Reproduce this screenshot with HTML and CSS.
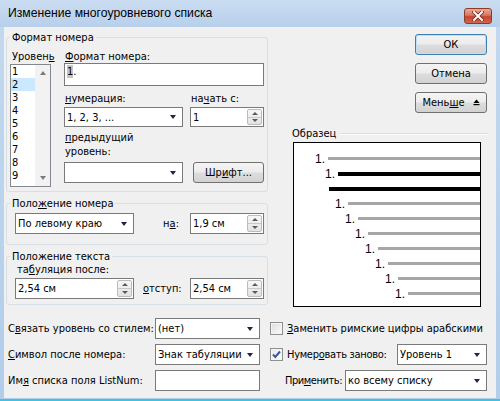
FILE: index.html
```html
<!DOCTYPE html>
<html lang="ru">
  <head>
    <meta charset="UTF-8" />
    <title>Изменение многоуровневого списка</title>
    <link rel="stylesheet" href="styles.css">
  </head>
  <body>
    <div class="window">
      <!-- Заголовок окна -->
      <div class="titlebar">
        <span class="title">Изменение многоуровневого списка</span>
        <span class="close">
          <svg width="12" height="10" viewBox="0 0 12 10">
            <path d="M2 1 L10 9 M10 1 L2 9" stroke="#7a2414" stroke-width="3.6" stroke-linecap="square" />
            <path d="M2 1 L10 9 M10 1 L2 9" stroke="#fff" stroke-width="2" stroke-linecap="square" />
          </svg>
        </span>
      </div>

      <div class="client">
        <div class="top">
          <div class="left">
            <!-- Формат номера -->
            <fieldset class="group">
              <legend>Формат номера</legend>
              <div class="format">
                <div class="levels">
                  <div class="lbl">Уровен<u>ь</u></div>
                  <div class="listbox">
                    <ul class="items">
                      <li>1</li>
                      <li class="sel">2</li>
                      <li>3</li>
                      <li>4</li>
                      <li>5</li>
                      <li>6</li>
                      <li>7</li>
                      <li>8</li>
                      <li>9</li>
                    </ul>
                    <div class="vscroll">
                      <i class="tri-up"></i>
                      <i class="tri-down"></i>
                    </div>
                  </div>
                </div>

                <div class="fields">
                  <div class="lbl wide"><u>Ф</u>ормат номера:</div>
                  <div class="edit wide"><span class="mark">1</span>.</div>

                  <div class="lbl gap6"><u>н</u>умерация:</div>
                  <div class="lbl gap6">на<u>ч</u>ать с:</div>
                  <div class="combo gap2"><span>1, 2, 3, ...</span><i class="caret"></i></div>
                  <div class="spin gap2">
                    <span>1</span>
                    <span class="spin-btns"><i><b class="s-up"></b></i><i><b class="s-down"></b></i></span>
                  </div>

                  <div class="lbl two wide"><u>п</u>редыдущий<br />уровень:</div>
                  <div class="combo gap3 tall"><span></span><i class="caret"></i></div>
                  <div class="btn font gap3"><span>Шр<u>и</u>фт...</span></div>
                </div>
              </div>
            </fieldset>

            <!-- Положение номера -->
            <fieldset class="group">
              <legend>Поло<u>ж</u>ение номера</legend>
              <div class="numpos">
                <div class="combo tall"><span>По левому краю</span><i class="caret"></i></div>
                <div class="lbl at">н<u>а</u>:</div>
                <div class="spin tall">
                  <span>1,9 см</span>
                  <span class="spin-btns"><i><b class="s-up"></b></i><i><b class="s-down"></b></i></span>
                </div>
              </div>
            </fieldset>

            <!-- Положение текста -->
            <fieldset class="group">
              <legend>Положение текста</legend>
              <div class="textpos">
                <div class="lbl tab">та<u>б</u>уляция после:</div>
                <div class="textpos-row">
                  <div class="spin tall">
                    <span>2,54 см</span>
                    <span class="spin-btns"><i><b class="s-up"></b></i><i><b class="s-down"></b></i></span>
                  </div>
                  <div class="lbl indent"><u>о</u>тступ:</div>
                  <div class="spin tall">
                    <span>2,54 см</span>
                    <span class="spin-btns"><i><b class="s-up"></b></i><i><b class="s-down"></b></i></span>
                  </div>
                </div>
              </div>
            </fieldset>
          </div>

          <div class="right">
            <div class="actions">
              <div class="btn default"><span>ОК</span></div>
              <div class="btn"><span>Отмена</span></div>
              <div class="btn">
                <span>Мень<u>ш</u>е</span>
                <svg class="eject" width="7" height="7" viewBox="0 0 7 7">
                  <polygon points="0.5,4 3.5,0.5 6.5,4" fill="#000" />
                  <rect x="0.5" y="5" width="6" height="1.2" fill="#000" />
                </svg>
              </div>
            </div>

            <!-- Образец -->
            <div class="sample-head"><span>Образец</span><i class="rule"></i></div>
            <div class="preview">
              <div class="row l1"><span class="num">1.</span><i class="bar"></i></div>
              <div class="row l2"><span class="num">1.</span><i class="bar dark"></i></div>
              <div class="row l3"><i class="bar dark"></i></div>
              <div class="row l4"><span class="num">1.</span><i class="bar"></i></div>
              <div class="row l5"><span class="num">1.</span><i class="bar"></i></div>
              <div class="row l6"><span class="num">1.</span><i class="bar"></i></div>
              <div class="row l7"><span class="num">1.</span><i class="bar"></i></div>
              <div class="row l8"><span class="num">1.</span><i class="bar"></i></div>
              <div class="row l9"><span class="num">1.</span><i class="bar"></i></div>
              <div class="row l10"><span class="num">1.</span><i class="bar"></i></div>
            </div>
          </div>
        </div>

        <!-- Нижние параметры -->
        <div class="options">
          <div class="lbl">С<u>в</u>язать уровень со стилем:</div>
          <div class="combo tall"><span>(нет)</span><i class="caret"></i></div>
          <div class="opt">
            <i class="check"></i>
            <span class="opt-text"><u>З</u>аменить римские цифры арабскими</span>
          </div>

          <div class="lbl"><u>С</u>имвол после номера:</div>
          <div class="combo tall"><span>Знак табуляции</span><i class="caret"></i></div>
          <div class="opt">
            <i class="check on">
              <svg width="11" height="11" viewBox="0 0 11 11">
                <path d="M2 5.5 L4.3 8 L9 2.5" fill="none" stroke="#3a5b9b" stroke-width="2" />
              </svg>
            </i>
            <span class="opt-text tight">Нумер<u>о</u>вать заново:</span>
            <div class="combo tall level"><span>Уровень 1</span><i class="caret"></i></div>
          </div>

          <div class="lbl">Им<u>я</u> списка поля ListNum:</div>
          <div class="edit tall"></div>
          <div class="opt apply">
            <span class="opt-text tighter">При<u>м</u>енить:</span>
            <div class="combo tall scope"><span>ко всему списку</span><i class="caret"></i></div>
          </div>
        </div>
      </div>
    </div>
  </body>
</html>
```

FILE: styles.css
```css
* {
  margin: 0;
  padding: 0;
  box-sizing: border-box;
}

body {
  font-family: "DejaVu Sans Condensed", Tahoma, "Liberation Sans", sans-serif;
  font-size: 11px;
  line-height: 13px;
  color: #000;
  background: #fff;
}

u {
  text-decoration-thickness: 1px;
  text-underline-offset: 1px;
}

/* Рамка окна */
.window {
  width: 500px;
  height: 401px;
  display: flex;
  flex-direction: column;
  background: linear-gradient(180deg, #c4d9f0, #b2cdea);
  border-bottom: 2px solid #3cc3e6;
  padding-bottom: 1px;
}

.titlebar {
  height: 27px;
  display: flex;
  align-items: center;
  justify-content: space-between;
  padding: 0 8px 0 8px;
  background: linear-gradient(180deg, #cadcf1 0%, #b8d0eb 100%);
}

.title {
  font-family: "Liberation Sans", sans-serif;
  font-size: 12.2px;
}

.close {
  width: 28px;
  height: 16px;
  margin-top: 4px;
  border: 1px solid #8d3a2b;
  border-radius: 3px;
  display: flex;
  align-items: center;
  justify-content: center;
  background: linear-gradient(180deg, #e9ab9b 0%, #d9765f 45%, #c5452c 55%, #d3664c 100%);
}

.client {
  flex: 1;
  margin: 0 4px;
  background: #f0f0f0;
  padding: 4px 8px 0 2px;
  display: flex;
  flex-direction: column;
}

.top {
  display: flex;
  gap: 24px;
}

.left {
  width: 262px;
  display: flex;
  flex-direction: column;
  gap: 5px;
}

/* Групповые рамки */
.group {
  border: 1px solid #d5dfe5;
  border-radius: 3px;
  padding: 0 3px;
  min-width: 0;
}

.group legend {
  padding: 0 2px;
  line-height: 13px;
}

.lbl {
  padding-left: 1px;
  white-space: nowrap;
}

/* Поля ввода */
.edit,
.combo,
.spin {
  background: #fff;
  border: 1px solid #7a7a7a;
  height: 20px;
}

.tall {
  height: 21px;
}

.combo {
  display: flex;
  align-items: center;
  justify-content: space-between;
  padding: 0 6px 0 2px;
}

.caret {
  width: 0;
  height: 0;
  border-style: solid;
  border-width: 4px 3.5px 0;
  border-color: #1d2740 transparent transparent;
}

.spin {
  display: flex;
  align-items: center;
  padding-left: 2px;
}

.spin-btns {
  align-self: stretch;
  width: 15px;
  margin: 1px 1px 1px auto;
  border: 1px solid #bcbcbc;
  border-radius: 2px;
  background: linear-gradient(180deg, #f7f7f7, #e2e2e2);
  display: flex;
  flex-direction: column;
}

.spin-btns i {
  flex: 1;
  display: flex;
  align-items: center;
  justify-content: center;
}

.spin-btns i + i {
  border-top: 1px solid #c8c8c8;
}

.s-up,
.s-down {
  width: 0;
  height: 0;
  border-style: solid;
  border-color: transparent;
}

.s-up {
  border-width: 0 3px 3px;
  border-bottom-color: #5a5a5a;
}

.s-down {
  border-width: 3px 3px 0;
  border-top-color: #5a5a5a;
}

/* Кнопки */
.btn {
  height: 21px;
  border: 1px solid #707070;
  border-radius: 3px;
  background: linear-gradient(180deg, #f4f4f4 0%, #ececec 48%, #dddddd 52%, #d2d2d2 100%);
  display: flex;
  align-items: center;
  justify-content: center;
  gap: 8px;
}

.btn.default {
  border-color: #3c7fb1;
  box-shadow: inset 0 0 0 1px #bfe1f7;
}

.eject {
  margin-top: -1px;
}

/* Формат номера */
.format {
  display: grid;
  grid-template-columns: 41px 200px;
  column-gap: 13px;
  padding: 6px 0 4px;
}

.levels .lbl {
  padding-left: 2px;
  margin-bottom: 1px;
}

.listbox {
  height: 123px;
  display: flex;
  background: #fff;
  border: 1px solid #828790;
}

.items {
  list-style: none;
  flex: 1;
}

.items li {
  height: 13px;
  padding-left: 1px;
}

.items .sel {
  background: #cce8ff;
}

.vscroll {
  width: 15px;
  background: #f2f2f2;
  display: flex;
  flex-direction: column;
  align-items: center;
  justify-content: space-between;
  padding: 6px 0 6px;
}

.tri-up,
.tri-down {
  width: 0;
  height: 0;
  border-style: solid;
  border-color: transparent;
}

.tri-up {
  border-width: 0 3.5px 4px;
  border-bottom-color: #7b7b7b;
}

.tri-down {
  border-width: 4px 3.5px 0;
  border-top-color: #7b7b7b;
}

.fields {
  display: grid;
  grid-template-columns: 119px 74px;
  column-gap: 7px;
  align-content: start;
}

.wide {
  grid-column: 1 / -1;
}

.fields .edit {
  height: 23px;
  padding: 1px 2px;
}

.mark {
  background: #c4c4c4;
}

.gap6 {
  margin-top: 6px;
}

.gap2 {
  margin-top: 2px;
}

.gap3 {
  margin-top: 3px;
}

.lbl.two {
  margin-top: 4px;
  line-height: 14px;
}

.btn.font {
  margin-left: 3px;
}

/* Положение номера */
.numpos {
  display: grid;
  grid-template-columns: 119px 1fr 74px;
  align-items: center;
  padding: 3px 0 10px 5px;
}

.lbl.at {
  justify-self: end;
  padding-right: 11px;
}

/* Положение текста */
.textpos {
  padding: 0 0 5px 5px;
}

.lbl.tab {
  padding-left: 2px;
}

.textpos-row {
  display: grid;
  grid-template-columns: 119px 1fr 74px;
  align-items: center;
  margin-top: 2px;
}

.lbl.indent {
  padding-left: 9px;
}

/* Правая колонка */
.right {
  width: 196px;
  display: flex;
  flex-direction: column;
  padding-top: 3px;
}

.actions {
  display: flex;
  flex-direction: column;
  align-items: flex-end;
  gap: 8px;
  margin-right: 1px;
}

.actions .btn {
  width: 72px;
}

.sample-head {
  display: flex;
  align-items: center;
  margin-top: 14px;
}

.rule {
  flex: 1;
  margin-left: 4px;
  border-top: 1px solid #d5dfe5;
  border-bottom: 1px solid #fff;
}

.preview {
  margin: 2px 0 0 1px;
  width: 188px;
  height: 165px;
  border: 1px solid #000;
  background: #fff;
  padding-top: 8px;
}

.row {
  height: 15px;
  display: flex;
  align-items: center;
}

.num {
  width: 13px;
  font-family: "Liberation Sans", sans-serif;
  font-size: 12px;
  line-height: 15px;
  padding-top: 2px;
}

.bar {
  flex: 1;
  height: 3px;
  background: #a6a6a6;
}

.bar.dark {
  height: 4px;
  background: #000;
}

.l1 { padding-left: 21px; }
.l2 { padding-left: 31px; }
.l3 { padding-left: 35px; }
.l4 { padding-left: 41px; }
.l5 { padding-left: 51px; }
.l6 { padding-left: 61px; }
.l7 { padding-left: 71px; }
.l8 { padding-left: 81px; }
.l9 { padding-left: 91px; }
.l10 { padding-left: 101px; }

/* Нижние параметры */
.options {
  display: grid;
  grid-template-columns: 149px 105px minmax(0, 1fr);
  row-gap: 5px;
  align-items: center;
  margin-top: 11px;
}

.options > .lbl {
  padding-left: 2px;
}

.opt {
  display: flex;
  align-items: center;
  gap: 4px;
  padding-left: 10px;
  margin-right: 1px;
  white-space: nowrap;
  min-width: 0;
}

.opt-text {
  flex: 0 1 auto;
  min-width: 0;
}

.opt-text.tight {
  letter-spacing: -0.3px;
}

.opt-text.tighter {
  letter-spacing: -0.45px;
}

.check {
  flex: none;
  width: 13px;
  height: 13px;
  border: 1px solid #8e8f8f;
  background: linear-gradient(135deg, #dcdcdc, #fbfbfb);
  box-shadow: inset 0 0 0 1px #f4f4f4;
  display: flex;
  align-items: center;
  justify-content: center;
}

.check.on {
  background: linear-gradient(135deg, #e8e8e8, #ffffff);
}

.combo.level {
  flex: none;
  width: 90px;
  margin-left: auto;
}

.opt.apply {
  padding-left: 25px;
}

.combo.scope {
  flex: none;
  width: 142px;
  margin-left: auto;
}
```
